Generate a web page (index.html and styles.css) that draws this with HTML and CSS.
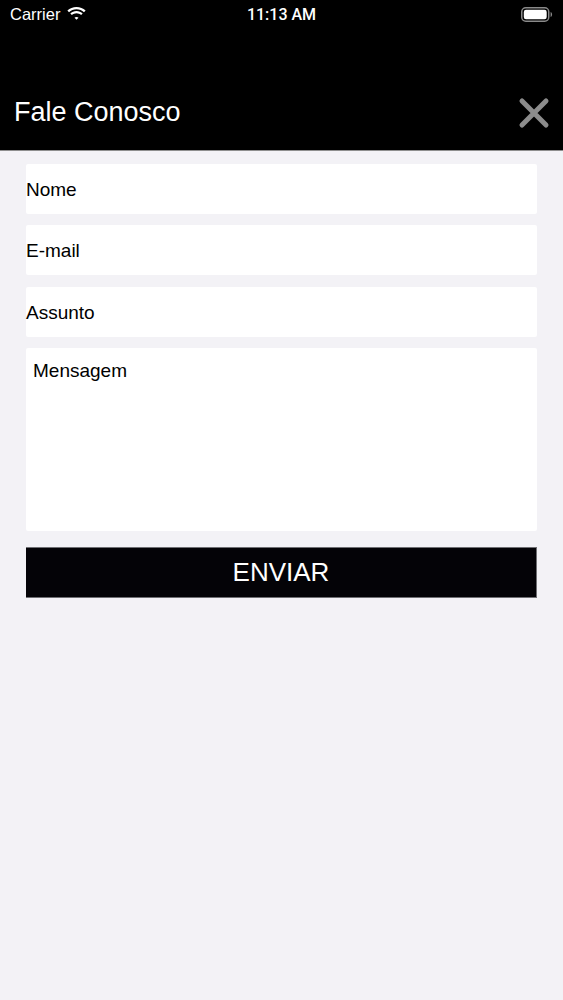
FILE: index.html
```html
<!DOCTYPE html>
<html lang="pt">
<head>
<meta charset="utf-8">
<title>Fale Conosco</title>
<link rel="stylesheet" href="styles.css">
</head>
<body>
<div class="app">
  <header class="header">
    <div class="status">
      <div class="status-left">
        <span class="carrier">Carrier</span>
        <svg class="wifi" width="21" height="15" viewBox="0 0 21 15">
          <path d="M10.5 3.2c2.9 0 5.5 1.1 7.5 3l1.6-1.6C17.2 2.3 14 1 10.5 1S3.8 2.3 1.4 4.6L3 6.2c2-1.9 4.6-3 7.5-3z" fill="#fff"/>
          <path d="M10.5 7.2c1.8 0 3.4.7 4.6 1.8l1.6-1.6c-1.6-1.5-3.8-2.4-6.2-2.4S5.9 5.9 4.3 7.4L5.9 9c1.2-1.1 2.8-1.8 4.6-1.8z" fill="#fff"/>
          <path d="M10.5 11c.8 0 1.5.3 2 .8l-2 2-2-2c.5-.5 1.2-.8 2-.8z" fill="#fff"/>
        </svg>
      </div>
      <span class="time">11:13 AM</span>
      <div class="status-right">
        <svg class="battery" width="32" height="15" viewBox="0 0 32 15">
          <rect x="0.75" y="0.75" width="27" height="13.5" rx="4" fill="none" stroke="#8a8a8a" stroke-width="1.5"/>
          <rect x="2.8" y="2.8" width="22.9" height="9.4" rx="2.2" fill="#fff"/>
          <path d="M29.6 5v5c.9-.3 1.5-1.4 1.5-2.5S30.5 5.3 29.6 5z" fill="#8a8a8a"/>
        </svg>
      </div>
    </div>
    <div class="nav">
      <h1 class="title">Fale Conosco</h1>
      <svg class="close" width="32" height="32" viewBox="0 0 32 32">
        <path d="M4 4L28 28M28 4L4 28" stroke="#8c8c8c" stroke-width="5" stroke-linecap="round"/>
      </svg>
    </div>
  </header>
  <main class="form">
    <div class="field"><span class="placeholder">Nome</span></div>
    <div class="field"><span class="placeholder">E-mail</span></div>
    <div class="field field-assunto"><span class="placeholder">Assunto</span></div>
    <div class="field message"><span class="placeholder">Mensagem</span></div>
    <button class="submit">ENVIAR</button>
  </main>
</div>
</body>
</html>
```
FILE: styles.css
```css
* { box-sizing: border-box; }
html, body {
  margin: 0;
  padding: 0;
  background: #f3f2f6;
  font-family: "Liberation Sans", Arial, sans-serif;
}
.app {
  width: 563px;
  min-height: 1000px;
  background: #f3f2f6;
}
.header {
  background: #000;
  height: 151px;
  border-bottom: 1px solid #8e8e8e;
  display: flex;
  flex-direction: column;
}
.status {
  height: 29px;
  display: grid;
  grid-template-columns: 1fr auto 1fr;
  align-items: center;
  color: #fff;
  padding: 0 10px;
}
.status-left {
  display: flex;
  align-items: center;
  gap: 6px;
}
.carrier { font-size: 16.5px; }
.wifi { margin-top: -2px; }
.time {
  font-family: Roboto, "Liberation Sans", sans-serif;
  font-size: 16px;
  font-weight: 500;
}
.status-right {
  display: flex;
  justify-content: flex-end;
}
.battery { margin-top: -1px; }
.nav {
  margin-top: auto;
  margin-bottom: 16px;
  height: 44px;
  display: flex;
  align-items: center;
  justify-content: space-between;
  padding: 0 13px 0 14px;
}
.title {
  margin: 0;
  color: #fff;
  font-weight: normal;
  font-size: 27px;
}
.close { margin-top: 2px; }
.form {
  padding: 13px 26px 0 26px;
  display: flex;
  flex-direction: column;
  gap: 11px;
}
.field {
  background: #fff;
  height: 50px;
  border-radius: 2px;
  display: flex;
  align-items: center;
  padding-top: 2px;
  font-size: 19px;
  color: #000;
}
.field-assunto { margin-top: 1px; }
.field.message {
  height: 183px;
  align-items: flex-start;
  padding: 12px 7px;
}
.submit {
  margin-top: 5px;
  height: 51px;
  background: #040307;
  color: #fff;
  border: 1px solid #6f6f73;
  border-left: none;
  border-radius: 0;
  font-family: "Liberation Sans", Arial, sans-serif;
  font-size: 26px;
  padding: 0;
}
```
